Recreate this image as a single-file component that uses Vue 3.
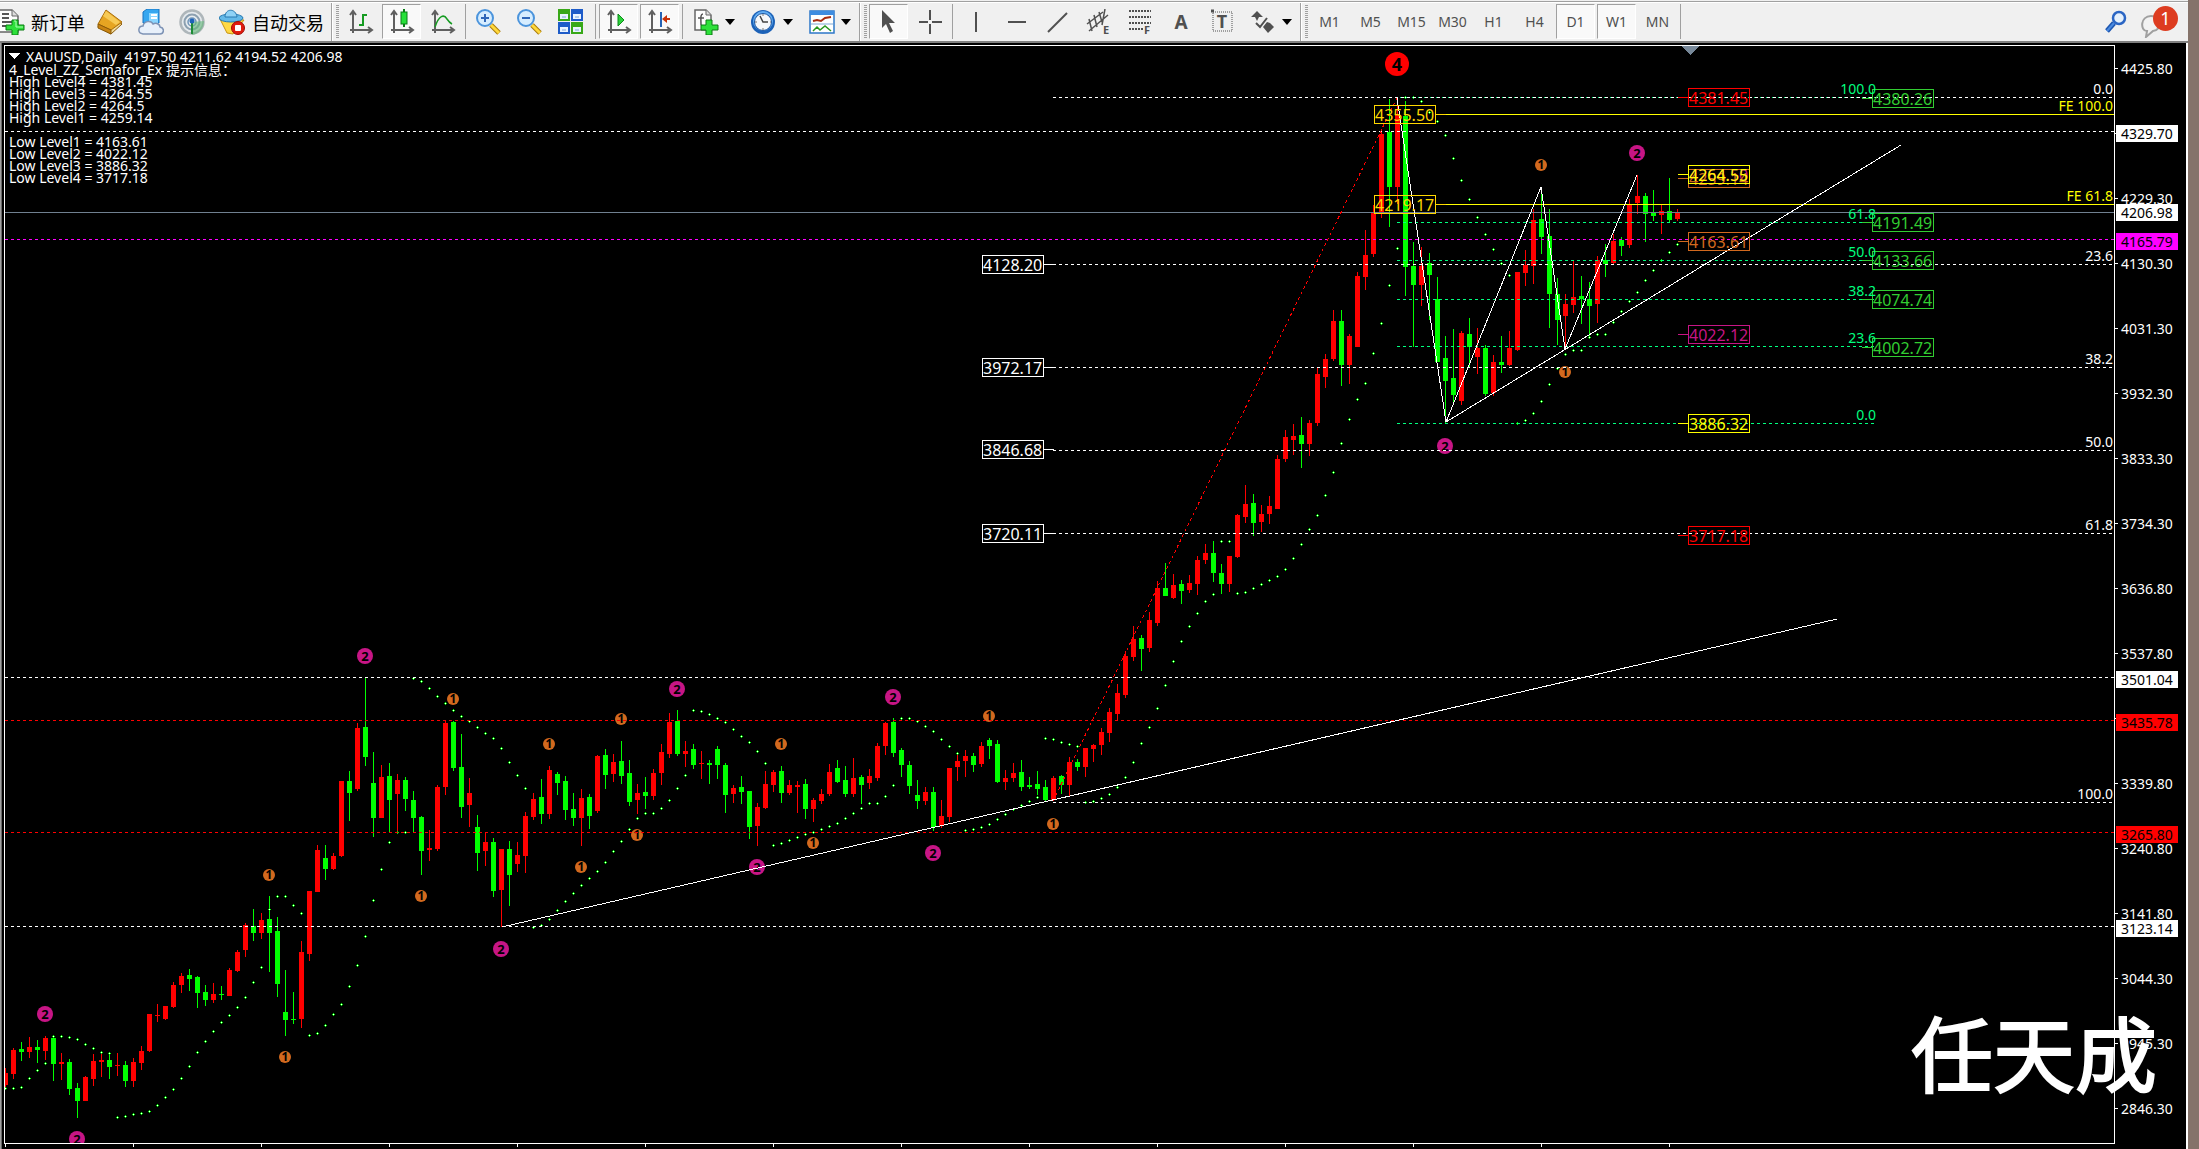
<script setup>
const periods = [
  { name: 'M1' }, { name: 'M5' }, { name: 'M15' }, { name: 'M30' }, { name: 'H1' },
  { name: 'H4' }, { name: 'D1', on: true }, { name: 'W1', on: true }, { name: 'MN' }
]

const title = 'XAUUSD,Daily  4197.50 4211.62 4194.52 4206.98'

const info = [
  { y: 87, t: 'High Level4 = 4381.45' },
  { y: 99, t: 'High Level3 = 4264.55' },
  { y: 111, t: 'High Level2 = 4264.5' },
  { y: 123, t: 'High Level1 = 4259.14' },
  { y: 147, t: 'Low Level1 = 4163.61' },
  { y: 159, t: 'Low Level2 = 4022.12' },
  { y: 171, t: 'Low Level3 = 3886.32' },
  { y: 183, t: 'Low Level4 = 3717.18' }
]

// One candle per entry: direction (r = up, g = down), high, body top, body bottom, low
const series = `r1068,1073,1085,1087 r1048,1050,1074,1079 g1042,1049,1052,1061 r1037,1047,1052,1058 g1040,1047,1050,1063
r1036,1038,1051,1060 g1037,1038,1064,1081 r1053,1062,1064,1080 g1059,1062,1089,1095 g1083,1088,1101,1118
r1076,1077,1101,1101 r1054,1061,1079,1086 r1053,1060,1062,1077 g1053,1060,1067,1079 r1053,1065,1066,1076
g1061,1065,1081,1087 r1058,1062,1081,1087 r1046,1051,1063,1070 r1014,1014,1051,1052 r1004,1015,1016,1022
r1006,1006,1019,1020 r982,985,1007,1008 r973,976,985,993 g969,975,979,991 g976,977,993,1008
g985,992,1000,1006 r983,994,1000,1003 g986,994,995,1000 r968,970,996,996 r950,952,971,972
r923,925,950,957 g909,926,933,941 r913,920,933,939 g896,919,933,972 g917,931,984,997
g970,1012,1020,1036 g992,1019,1020,1024 r941,952,1019,1028 r891,891,954,961 r845,850,892,892
g845,858,869,880 r853,856,869,870 r781,781,856,857 g771,781,793,821 r723,728,789,791
g677,727,757,766 g752,783,818,837 r765,777,818,818 g763,776,800,832 r774,780,794,832
g777,780,799,811 g791,800,818,832 g816,817,851,875 r830,848,850,861 r785,787,849,851
r720,723,787,795 g721,722,768,771 g734,767,807,818 r778,793,805,827 g815,827,853,871
r832,842,851,866 g838,842,891,897 r849,849,890,927 g841,849,875,906 r842,855,864,872
r812,816,856,873 r793,799,817,820 g779,797,814,824 r766,770,814,819 g772,774,783,795
g776,781,810,820 g793,809,818,826 r789,798,818,846 g794,797,816,829 r755,756,811,813
g749,755,775,789 r754,762,774,782 g741,761,776,784 g760,773,802,806 r784,793,800,814
g777,792,796,809 r769,773,796,800 r744,752,773,785 r713,722,754,758 g710,721,754,756
r741,751,754,767 g744,749,765,769 r751,763,764,779 g760,763,765,784 g746,749,765,779
g763,765,795,813 r785,788,794,803 g776,787,792,804 g791,791,827,839 r803,807,826,846
r771,784,808,809 r770,772,785,792 g766,771,793,803 r780,785,793,795 r781,785,787,813
g779,784,809,819 r798,800,809,822 r789,794,801,804 r764,772,794,796 g760,768,782,783
g766,780,794,797 r758,778,794,797 g775,777,785,804 r769,776,783,789 r743,746,778,781
r722,723,746,755 g718,722,753,757 g748,750,765,777 g761,765,786,794 g780,795,801,809
r787,792,801,805 g787,792,827,831 r800,816,826,828 r768,768,817,822 r754,761,767,781
r750,756,761,777 g753,756,765,772 r742,746,764,767 g738,740,746,759 g740,744,782,783
r770,778,782,790 r763,773,778,782 g760,772,787,791 g777,785,787,789 g771,784,789,795
g780,787,800,801 r776,778,800,801 g775,776,785,794 r757,762,785,796 g759,762,767,771
r748,748,767,777 r744,745,749,762 r728,732,745,755 r708,712,733,742 r684,693,714,720
r651,656,695,698 r626,639,657,661 g635,638,649,671 r612,620,648,652 r581,588,623,626
g563,588,596,596 r574,585,598,599 g580,584,591,604 r575,583,590,593 r556,560,584,595
r544,553,560,564 g541,553,573,582 g564,573,584,594 r556,556,584,592 r514,515,557,558
r485,504,517,523 g494,503,523,536 r505,514,522,532 r496,506,514,524 r455,459,509,509
r430,437,459,462 r424,436,440,455 g417,435,444,468 r420,423,444,456 r368,374,423,426
r354,359,377,388 r310,321,359,361 g310,321,365,386 r334,336,365,384 r272,276,347,347
r230,255,277,290 r205,212,254,257 r129,134,212,218 g99,132,187,227 r99,114,187,204
g101,116,267,296 g242,266,285,347 r247,266,285,306 g253,263,275,320 g277,299,362,362
g336,358,381,423 g329,378,395,403 r331,333,401,405 g318,334,347,367 r328,348,357,374
g345,348,394,396 r355,362,393,396 g336,362,365,373 r331,348,365,366 r272,272,350,351
r250,265,273,286 r209,220,266,284 g191,219,237,254 g209,236,294,328 g278,294,320,345
r294,304,316,349 r260,297,305,313 g276,296,299,324 g282,299,306,337 r256,260,304,323
g244,260,264,277 r234,241,263,264 g237,240,246,256 r199,205,245,248 r175,196,203,214
g193,196,214,242 g190,212,216,221 r205,211,215,234 g178,211,220,222 r209,212,219,221`

const step = 8
const candles = series.split(/\s+/).map((s, i) => {
  const [high, top, bottom, low] = s.slice(1).split(',').map(Number)
  return { x: 5 + i * step, up: s[0] === 'r', high, top, bottom, low }
})

const sar = [
  1088, 1088, 1087, 1078, 1070, 1063, 1036, 1036, 1037, 1039, 1044, 1048, 1052, 1053,
  1117, 1116, 1114, 1113, 1111, 1105, 1097, 1089, 1078, 1066, 1052, 1041, 1031, 1022, 1015, 1007, 997, 982, 967, 909,
  896, 896, 905, 913, 1035, 1033, 1025, 1014, 1004, 986, 965, 936, 900, 869, 842, 832, 832,
  678, 681, 688, 696, 703, 710, 716, 721, 727, 733, 738, 748, 762, 775, 788,
  927, 925, 919, 910, 901, 893, 885, 878, 871, 862, 851, 841, 829, 818, 813, 813, 808, 800, 788, 775,
  710, 711, 714, 718, 722, 729, 736, 742, 751, 763,
  845, 843, 840, 837, 834, 832, 829, 826, 823, 818, 813, 808, 803, 803, 796, 785,
  718, 718, 721, 726, 731, 739, 746, 753, 830, 829, 827, 824, 819, 814, 809, 805, 801, 797,
  738, 739, 742, 744, 746, 802, 801, 798, 794, 787, 777, 762, 743, 727, 708, 685, 661, 641, 626, 613, 601, 594,
  541, 541, 593, 592, 588, 584, 580, 576, 569, 558, 544, 529, 515, 495, 472, 443, 419, 399, 383, 353, 323, 285, 248,
  97, 97, 101, 112, 121, 135, 158, 180, 199, 217, 234, 249, 263, 275,
  423, 420, 413, 401, 384, 368, 354, 350, 350, 337, 334, 334, 322, 311, 301, 292, 280, 270, 260, 252, 244
].map((y, i) => ({ x: 5 + i * step, y }))

const levels = [
  { y: 131, x: 5, end: 2114, c: '#fff', dash: true },
  { y: 212, x: 5, end: 2114, c: '#708090' },
  { y: 239, x: 5, end: 2114, c: '#f0f', dash: true },
  { y: 677, x: 5, end: 2114, c: '#fff', dash: true },
  { y: 926, x: 5, end: 2114, c: '#fff', dash: true },
  { y: 720, x: 5, end: 2114, c: '#f00', dash: true },
  { y: 832, x: 5, end: 2114, c: '#f00', dash: true },
  { y: 97, x: 1400, end: 1875, c: '#00ff7f', dash: true },
  ...[222, 260, 299, 346, 423].map(y => ({ y, x: 1397, end: 1875, c: '#00ff7f', dash: true })),
  ...[97, 264, 367, 450, 533, 802].map(y => ({ y, x: 1053, end: 2114, c: '#fff', dash: true })),
  { y: 114, x: 1446, end: 2114, c: '#ff0' },
  { y: 204, x: 1446, end: 2114, c: '#ff0' }
]

const fibs = [
  { y: 94, t: '0.0' }, { y: 261, t: '23.6' }, { y: 364, t: '38.2' },
  { y: 447, t: '50.0' }, { y: 530, t: '61.8' }, { y: 799, t: '100.0' },
  { y: 111, t: 'FE 100.0', c: '#ff0' }, { y: 201, t: 'FE 61.8', c: '#ff0' },
  { y: 94, t: '100.0', c: '#00ff7f', x: 1876 }, { y: 219, t: '61.8', c: '#00ff7f', x: 1876 },
  { y: 257, t: '50.0', c: '#00ff7f', x: 1876 }, { y: 296, t: '38.2', c: '#00ff7f', x: 1876 },
  { y: 343, t: '23.6', c: '#00ff7f', x: 1876 }, { y: 420, t: '0.0', c: '#00ff7f', x: 1876 }
]

// Price tags on the chart; y is the level that the tag points at
const right = (y, t, c) => ({ x: 1688, y, t, c, from: 1678, to: 1688 })
const green = (y, t) => ({ x: 1872, y, t, c: '#32cd32', from: 1862, to: 1872 })
const left = (x, y, t, c) => ({ x, y, t, c, from: x + 61, to: x + 72 })
const tags = [
  left(982, 264, '4128.20', '#fff'),
  left(982, 367, '3972.17', '#fff'),
  left(982, 449, '3846.68', '#fff'),
  left(982, 533, '3720.11', '#fff'),
  left(1374, 114, '4355.50', '#ffd700'),
  left(1374, 204, '4219.17', '#ffd700'),
  right(97, '4381.45', '#f00'),
  right(174, '4264.50', '#c71585'),
  right(178, '4259.14', '#d2691e'),
  right(174, '4264.55', '#ff0'),
  right(241, '4163.61', '#d2691e'),
  right(334, '4022.12', '#c71585'),
  right(423, '3886.32', '#ff0'),
  right(535, '3717.18', '#f00'),
  green(98, '4380.26'), green(222, '4191.49'), green(260, '4133.66'),
  green(299, '4074.74'), green(347, '4002.72')
]

const marks = [
  ...[[269, 875], [285, 1057], [421, 896], [453, 699], [549, 744], [621, 719], [581, 867], [637, 835],
    [781, 744], [813, 843], [989, 716], [1053, 824], [1541, 165], [1565, 372]]
    .map(([x, y]) => ({ x, y, r: 6, n: 1, c: '#d2691e', size: 12, drop: 4 })),
  ...[[45, 1014], [77, 1139], [365, 656], [501, 949], [677, 689], [757, 867], [893, 697], [933, 853],
    [1637, 153], [1445, 446]]
    .map(([x, y]) => ({ x, y, r: 8, n: 2, c: '#c71585', size: 13, drop: 5 })),
  { x: 1397, y: 64, r: 12, n: 4, c: '#f00', size: 18, drop: 7 }
]

const axis = ['4425.80', '', '4229.30', '4130.30', '4031.30', '3932.30', '3833.30', '3734.30', '3636.80',
  '3537.80', '', '3339.80', '3240.80', '3141.80', '3044.30', '2945.30', '2846.30']
  .map((t, i) => ({ t, y: 68 + i * 65 }))

const prices = [
  { y: 125, t: '4329.70', c: '#fff' }, { y: 204, t: '4206.98', c: '#fff' },
  { y: 233, t: '4165.79', c: '#f0f' }, { y: 671, t: '3501.04', c: '#fff' },
  { y: 714, t: '3435.78', c: '#f00' }, { y: 826, t: '3265.80', c: '#f00' },
  { y: 920, t: '3123.14', c: '#fff' }
]

const days = Array.from({ length: 14 }, (_, i) => 5 + i * 128)
</script>

<template>
  <div class="page">
    <main class="terminal">
      <header class="toolbar">
        <button class="wide order">
          <svg class="ic" viewBox="0 0 26 26">
            <path d="M-5 1H12L18 7V23H-5Z" fill="#fcfcfc" stroke="#666" stroke-width="1.5" />
            <path d="M12 1V7H18" fill="#ddd" stroke="#666" />
            <path d="M2 5H9M2 9H9M2 13H13M2 17H8" stroke="#555" stroke-width="2" />
            <path d="M12 11H18V16H24V21H18V26H12V21H6V16H12Z" fill="#2de03a" stroke="#0b7d12" />
            <path d="M14 12H16V18H23" fill="none" stroke="#aaffb0" />
          </svg>
          <span>新订单</span>
        </button>
        <button class="mid" aria-label="Market book">
          <svg class="ic" viewBox="0 0 26 26">
            <path d="M9 3L25 15L14 25L1 18Z" fill="#f3dc9a" stroke="#8a5a08" />
            <path d="M9 1L25 13L14 21L1 15Z" fill="#e6a522" stroke="#a86c0a" />
            <path d="M9 2L23 13L19 16L6 7Z" fill="#f7ca55" />
            <path d="M1 15V19L14 25V21Z" fill="#c98412" stroke="#8a5a08" />
          </svg>
        </button>
        <button class="mid" aria-label="Cloud server">
          <svg class="ic" viewBox="0 0 26 26">
            <path d="M5 3L9 0H21V14H5Z" fill="#36a7f0" stroke="#1673c0" />
            <path d="M11 4H20V14H11Z" fill="#8ad6ff" />
            <path d="M13 6H19M13 9H19" stroke="#fff" stroke-width="2" />
            <path d="M5 25C-1 24 0 17 5 17C6 12 13 11 15 15C19 13 22 16 22 18C27 19 26 25 22 25Z" fill="#e8f0fa" stroke="#7e93b5" stroke-width="1.5" />
          </svg>
        </button>
        <button class="mid" aria-label="Signals">
          <svg class="ic" viewBox="0 0 26 26" fill="none">
            <circle cx="13" cy="13" r="11.5" stroke="#aeb6ba" stroke-width="2.5" fill="#e6ebee" />
            <circle cx="13" cy="13" r="7.5" stroke="#8ca0b0" stroke-width="2" />
            <circle cx="13" cy="13" r="4" stroke="#6f94b8" stroke-width="1.5" />
            <path d="M13 13V26C20 25 25 19 25 12Z" fill="#62b878" fill-opacity=".6" />
            <path d="M13 13V25" stroke="#1d8c35" stroke-width="2" />
            <circle cx="13" cy="12" r="2.5" fill="#1d62b8" />
          </svg>
        </button>
        <button class="wide auto">
          <svg class="ic" viewBox="0 0 26 26">
            <path d="M1 10L25 11L14 25L8 24Z" fill="#ffd945" stroke="#c79413" />
            <ellipse cx="12" cy="9" rx="12" ry="4" fill="#64b9e8" stroke="#2678b0" />
            <path d="M6 8C6 -1 17 -1 18 8Z" fill="#8fd2f6" stroke="#2678b0" />
            <circle cx="19" cy="19" r="6.5" fill="#e01c10" stroke="#a00c06" />
            <rect x="16" y="16" width="6" height="6" rx="1" fill="#fff" />
          </svg>
          <span>自动交易</span>
        </button>
        <i class="sep end"></i><i class="grip"></i>

        <button class="tool" aria-label="Bar chart">
          <svg class="ic axes" viewBox="1 0 26 26"><path class="ax" d="M6 3V24M3 21H24M3 6L6 2L9 6M21 18L25 21L21 24" /><path d="M16 5V17M16 6H20M12 16H16" stroke="#169b22" stroke-width="2" /></svg>
        </button>
        <button class="tool on" aria-label="Candlesticks">
          <svg class="ic axes" viewBox="1 0 26 26"><path class="ax" d="M6 3V24M3 21H24M3 6L6 2L9 6M21 18L25 21L21 24" /><path d="M16 0V18" stroke="#0a7d16" stroke-width="2" /><rect x="13" y="3" width="6" height="12" fill="#27e03a" stroke="#0a7d16" /></svg>
        </button>
        <button class="tool" aria-label="Line chart">
          <svg class="ic axes" viewBox="1 0 26 26"><path class="ax" d="M6 3V24M3 21H24M3 6L6 2L9 6M21 18L25 21L21 24" /><path d="M6 18C10 6 15 5 18 10C20 13 21 14 23 15" fill="none" stroke="#169b22" stroke-width="1.5" /></svg>
        </button>
        <i class="sep"></i>
        <button class="tool" aria-label="Zoom in">
          <svg class="ic" viewBox="1 0 26 26"><path d="M16 16L24 24" stroke="#a87a08" stroke-width="5" /><path d="M16 16L24 24" stroke="#ffd83c" stroke-width="3" /><circle cx="10" cy="9" r="8" fill="#d6edff" stroke="#4b94dc" stroke-width="2" /><path d="M6 9H14M10 5V13" stroke="#2f66b8" stroke-width="2" /></svg>
        </button>
        <button class="tool" aria-label="Zoom out">
          <svg class="ic" viewBox="1 0 26 26"><path d="M16 16L24 24" stroke="#a87a08" stroke-width="5" /><path d="M16 16L24 24" stroke="#ffd83c" stroke-width="3" /><circle cx="10" cy="9" r="8" fill="#d6edff" stroke="#4b94dc" stroke-width="2" /><path d="M6 9H14" stroke="#2f66b8" stroke-width="2" /></svg>
        </button>
        <button class="tool" aria-label="Tile windows">
          <svg class="ic" viewBox="1 0 26 26">
            <path d="M1 0H13V12H1ZM14 13H26V25H14Z" fill="#38a818" /><path d="M14 0H26V12H14ZM1 13H13V25H1Z" fill="#1d5bc8" />
            <path d="M3 5H11V10H3ZM16 5H24V10H16ZM3 18H11V23H3ZM16 18H24V23H16Z" fill="#e9f3ff" />
            <path d="M5 8H9M18 8H22M5 21H9M18 21H22" stroke="#7da6d8" stroke-width="1" />
          </svg>
        </button>
        <i class="sep far"></i>
        <button class="tool on" aria-label="Auto scroll">
          <svg class="ic axes" viewBox="1 0 26 26"><path class="ax" d="M6 3V24M3 21H24M3 6L6 2L9 6M21 18L25 21L21 24" /><path d="M13 5L19 11L13 17Z" fill="#2bd33a" stroke="#0d8a1a" /></svg>
        </button>
        <button class="tool on" aria-label="Chart shift">
          <svg class="ic axes" viewBox="1 0 26 26"><path class="ax" d="M6 3V24M3 21H24M3 6L6 2L9 6M21 18L25 21L21 24" /><path d="M15 3V18" stroke="#2463b5" stroke-width="2" /><path d="M24 10H18" stroke="#c83208" stroke-width="2" /><path d="M16 10L21 6V14Z" fill="#c83208" /></svg>
        </button>
        <i class="sep"></i>
        <button class="drop" aria-label="Indicators">
          <svg class="ic" viewBox="0 0 26 26">
            <path d="M2 1H13L18 6V21H2Z" fill="#fcfcfc" stroke="#666" stroke-width="1.5" /><path d="M13 1V6H18" fill="#ddd" stroke="#666" />
            <path d="M10 5C7 5 8 10 8 16M5 9H11" fill="none" stroke="#555" stroke-width="1.5" />
            <path d="M13 11H19V16H25V21H19V26H13V21H8V16H13Z" fill="#2de03a" stroke="#0b7d12" />
          </svg><i class="tri"></i>
        </button>
        <button class="drop" aria-label="Periods">
          <svg class="ic" viewBox="1 0 26 26">
            <circle cx="13" cy="13" r="12" fill="#1c62b8" /><circle cx="13" cy="12" r="10" fill="#62adf2" /><circle cx="13" cy="13" r="8.5" fill="#f6f8fa" stroke="#1c55a0" />
            <path d="M10 7L13 13H18" fill="none" stroke="#444" stroke-width="1.5" /><path d="M13 5V7M13 19V21M5 13H7M20 13H21" stroke="#777" />
          </svg><i class="tri"></i>
        </button>
        <button class="drop" aria-label="Templates">
          <svg class="ic" viewBox="0 0 26 26">
            <rect x="1" y="2" width="24" height="22" fill="#fff" stroke="#2d77c8" stroke-width="1.5" /><path d="M1 2H25V6H1Z" fill="#3e8ce0" />
            <path d="M4 12L8 11L12 12L16 9L22 8" fill="none" stroke="#a82c10" stroke-width="2" /><path d="M2 15H24" stroke="#7fa8d4" /><path d="M4 22L8 18L11 21L16 17L22 22" fill="none" stroke="#28961e" stroke-width="1.5" />
          </svg><i class="tri"></i>
        </button>
        <i class="sep end tight"></i><i class="grip"></i>

        <button class="tool on" aria-label="Cursor">
          <svg class="ic" viewBox="1 0 26 26"><path d="M7 1V19L11 15L15 24L18 22L14 14H20Z" fill="#505050" /></svg>
        </button>
        <button class="tool" aria-label="Crosshair">
          <svg class="ic line" viewBox="0 0 26 26"><path d="M13 1V11M13 15V25M2 13H11M15 13H25" /></svg>
        </button>
        <i class="sep"></i>
        <button class="tool" aria-label="Vertical line">
          <svg class="ic line" viewBox="0 0 26 26"><path d="M13 3V23" /></svg>
        </button>
        <button class="tool" aria-label="Horizontal line">
          <svg class="ic line" viewBox="0 0 26 26"><path d="M4 13H22" /></svg>
        </button>
        <button class="tool" aria-label="Trendline">
          <svg class="ic line" viewBox="0 0 26 26"><path d="M3 23L22 4" /></svg>
        </button>
        <button class="tool" aria-label="Equidistant channel">
          <svg class="ic line" viewBox="0 0 26 26"><path d="M1 15L17 3M3 22L22 6M3 10L6 22M8 6L11 18M13 3L16 13M19 0L16 16" stroke-width="1.5" /><text x="17" y="25" font-size="11">E</text></svg>
        </button>
        <button class="tool" aria-label="Fibonacci retracement">
          <svg class="ic line" viewBox="0 0 26 26"><path d="M2 2H24M2 8H24M2 14H24M2 20H16" stroke-dasharray="2 1" /><text x="17" y="25" font-size="11">F</text></svg>
        </button>
        <button class="tool" aria-label="Text">
          <svg class="ic line" viewBox="0 0 26 26"><text x="13" y="20" font-size="19" text-anchor="middle">A</text></svg>
        </button>
        <button class="tool" aria-label="Text label">
          <svg class="ic line" viewBox="0 0 26 26"><rect x="4" y="3" width="19" height="19" stroke-width="1" stroke-dasharray="1 1" /><text x="13" y="19" font-size="18" text-anchor="middle">T</text><path d="M2 2H5" stroke-width="3" /></svg>
        </button>
        <button class="drop" aria-label="Arrows">
          <svg class="ic line" viewBox="0 0 26 26"><path d="M1 8L7 2L13 8H9L7 12L5 8ZM13 18L17 13L20 14L24 18L18 24Z" fill="#505050" stroke="none" /><path d="M6 14L10 18L17 9" /></svg><i class="tri"></i>
        </button>
        <i class="sep end tight"></i><i class="grip"></i>

        <button v-for="p in periods" :key="p.name" class="tool period" :class="{ on: p.on }">{{ p.name }}</button>
        <i class="sep last"></i>

        <button class="search" aria-label="Search">
          <svg class="ic" viewBox="0 0 26 26"><path d="M11 14L4 22" stroke="#1c55b0" stroke-width="5" /><path d="M11 14L4 22" stroke="#4a8ae0" stroke-width="2" /><circle cx="16" cy="9" r="6" fill="#e6f1fc" stroke="#2b66c4" stroke-width="2.5" /></svg>
        </button>
        <button class="chat" aria-label="Notifications">
          <svg class="bubble" viewBox="0 0 22 24"><path d="M10 2C-1 2 -1 17 6 17L5 23L12 17C22 16 21 2 10 2Z" fill="#f2f2f2" stroke="#a0a0a0" stroke-width="2" /></svg>
          <span class="badge">1</span>
        </button>
      </header>

      <section class="chart">
        <svg class="plot" viewBox="2 43 2184 1106" role="img" aria-label="XAUUSD Daily">
          <clipPath id="area"><rect x="5" y="46" width="2109" height="1097" /></clipPath>
          <g class="crisp" clip-path="url(#area)">
            <g v-for="c in candles" :key="c.x" :fill="c.up ? '#f00' : '#0f0'">
              <rect :x="c.x" :y="c.high" width="1" :height="c.low - c.high" />
              <rect :x="c.x - 2" :y="c.top" width="5" :height="c.bottom - c.top" />
            </g>
            <g v-for="d in sar" :key="d.x">
              <path :d="`M${d.x - 1} ${d.y}h3v1h-3zM${d.x} ${d.y - 1}h1v3h-1z`" fill="#0f0" />
              <rect :x="d.x" :y="d.y" width="1" height="1" fill="#fff" />
            </g>
          </g>

          <g clip-path="url(#area)">
            <g v-for="m in marks" :key="m.x + '-' + m.y">
              <circle :cx="m.x" :cy="m.y" :r="m.r" :fill="m.c" />
              <text class="mark" :x="m.x" :y="m.y + m.drop" :font-size="m.size">{{ m.n }}</text>
            </g>
          </g>

          <g class="crisp">
            <line v-for="(l, i) in levels" :key="i" :x1="l.x" :x2="l.end" :y1="l.y + 0.5" :y2="l.y + 0.5"
              :stroke="l.c" :stroke-dasharray="l.dash ? '3 3' : null" />
            <path d="M1053 801L1397 98" fill="none" stroke="#f00" stroke-dasharray="3 3" />
            <path d="M502 927L1837 619M1446 422L1901 145M1397 98L1446 422L1541 187L1565 349L1637 175" fill="none" stroke="#fff" />
            <path d="M4.5 1143V45.5H2114.5V1143.5H4" fill="none" stroke="#fff" />
            <path v-for="x in days" :key="x" :d="`M${x}.5 1143v4`" stroke="#fff" />
            <path v-for="a in axis" :key="a.y" :d="`M2115 ${a.y}.5h3`" stroke="#fff" />
            <path d="M1682 46H1699L1690 55Z" fill="#778899" />
            <path d="M9 53H20L14 59Z" fill="#fff" />
          </g>

          <g v-for="(t, i) in tags" :key="i">
            <path class="crisp" :d="`M${t.from} ${t.y}.5H${t.to}M${t.x}.5 ${t.y - 9}.5h61v18h-61z`" fill="none" :stroke="t.c" />
            <text class="tag" :x="t.x + 1" :y="t.y + 7" :fill="t.c">{{ t.t }}</text>
          </g>

          <text v-for="(f, i) in fibs" :key="i" class="fib" :x="f.x || 2113" :y="f.y" :fill="f.c || '#fff'">{{ f.t }}</text>

          <text v-for="a in axis" :key="a.y" x="2121" :y="a.y + 6" fill="#fff">{{ a.t }}</text>
          <g v-for="p in prices" :key="p.t">
            <rect x="2116" :y="p.y" width="62" height="17" :fill="p.c" />
            <text x="2121" :y="p.y + 14" fill="#000">{{ p.t }}</text>
          </g>

          <text x="26" y="62" fill="#fff" class="keep">{{ title }}</text>
          <text x="9" y="75" fill="#fff">4_Level_ZZ_Semafor_Ex 提示信息：</text>
          <text v-for="l in info" :key="l.y" x="9" :y="l.y" fill="#fff">{{ l.t }}</text>

          <text class="name" x="1911" y="1086">任天成</text>
        </svg>
      </section>
    </main>
    <aside class="desktop"></aside>
  </div>
</template>

<style>
body {
  margin: 0;
  background: #000;
}
</style>

<style scoped>
.page {
  display: flex;
  font-family: "Noto Sans", "Noto Sans CJK SC", sans-serif;
}
.terminal {
  flex: 1;
  min-width: 0;
}
.desktop {
  width: 11px;
  background: #85736a;
}
.toolbar {
  display: flex;
  align-items: center;
  box-sizing: border-box;
  height: 43px;
  padding-top: 2px;
  background: linear-gradient(#f0f0f0 1px, #a0a0a0 1px, #a0a0a0 2px, #fff 2px, #fff 3px, #f0f0f0 3px);
  border-bottom: 2px solid #808080;
}
button {
  display: flex;
  flex: none;
  align-items: center;
  justify-content: center;
  box-sizing: border-box;
  height: 35px;
  padding: 0;
  border: 1px solid transparent;
  background: none;
  color: #505050;
  font-family: inherit;
  font-size: 14px;
}
.wide {
  gap: 5px;
  justify-content: flex-start;
  border: 0;
  color: #000;
  font-family: "Noto Sans CJK SC", sans-serif;
  font-size: 18px;
}
.order {
  width: 89px;
}
.auto {
  width: 119px;
  padding-left: 7px;
  gap: 7px;
}
.mid {
  width: 41px;
}
.tool {
  width: 39px;
  margin-right: 2px;
}
.drop {
  width: 56px;
  margin-right: 2px;
  gap: 6px;
}
.on {
  border-color: #a0a0a0 #fff #fff #a0a0a0;
  background: #f9f9f9;
}
.ic {
  flex: none;
  width: 26px;
  height: 26px;
}
.axes {
  fill: none;
}
.ax {
  stroke: #606060;
  stroke-width: 2;
}
.line {
  fill: none;
  stroke: #505050;
  stroke-width: 2;
}
.line text {
  fill: #505050;
  stroke: none;
  font-weight: 700;
}
.sep {
  flex: none;
  width: 1px;
  height: 35px;
  margin: 0 3px 0 1px;
  background: #a0a0a0;
}
.far {
  margin-left: 3px;
}
.end {
  height: 38px;
  margin: 0 3px 0 0;
  border-right: 1px solid #fff;
}
.tight {
  margin-left: -1px;
}
.last {
  margin-left: 1px;
}
.grip {
  flex: none;
  width: 3px;
  height: 33px;
  margin-right: 2px;
  background: repeating-linear-gradient(#a0a0a0 0 1px, #f0f0f0 1px 2px);
}
.tri {
  border: 5px solid transparent;
  border-top: 6px solid #000;
  border-bottom: 0;
}
.search {
  width: 30px;
  margin-left: auto;
}
.chat {
  position: relative;
  width: 42px;
  margin: 0 6px 0 9px;
  justify-content: flex-start;
}
.bubble {
  width: 22px;
  height: 24px;
  margin-top: 9px;
}
.badge {
  position: absolute;
  top: 1px;
  right: 3px;
  width: 25px;
  height: 25px;
  border-radius: 50%;
  background: #dd3c20;
  color: #fff;
  font-size: 18px;
  line-height: 25px;
  text-align: center;
}
.chart {
  border-left: 1px solid #a0a0a0;
  border-right: 2px solid #fff;
  background: #000;
  box-shadow: inset 1px 0 #696969;
  padding-left: 1px;
}
.plot {
  display: block;
  width: 100%;
  font-size: 14px;
}
.crisp {
  shape-rendering: crispEdges;
}
.keep {
  white-space: pre;
}
.tag {
  font-size: 16px;
}
.fib {
  text-anchor: end;
}
.mark {
  fill: #000;
  font-weight: 700;
  text-anchor: middle;
}
.name {
  fill: #fff;
  stroke: #fff;
  stroke-width: 2px;
  font-family: "Noto Sans CJK SC", sans-serif;
  font-size: 82px;
  font-weight: 400;
}
</style>
